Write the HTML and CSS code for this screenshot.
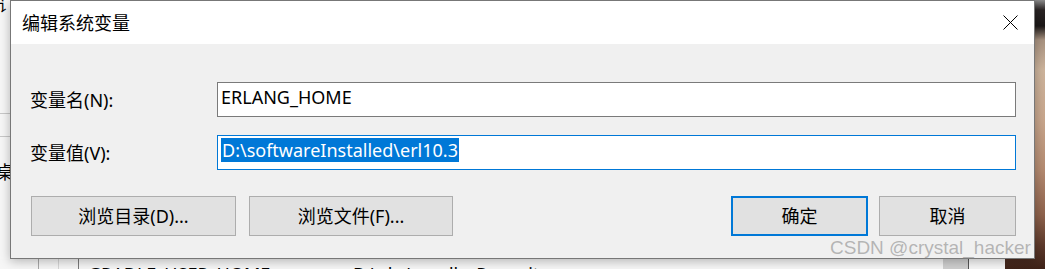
FILE: index.html
```html
<!DOCTYPE html>
<html lang="zh-CN">
<head>
<meta charset="utf-8">
<title>编辑系统变量</title>
<link rel="stylesheet" href="styles.css">
</head>
<body>
<div class="desktop">
  <div class="bg-left">
    <span class="bg-glyph-top">讠</span>
    <span class="bg-line l1"></span>
    <span class="bg-line l2"></span>
    <span class="bg-glyph-mid">桌</span>
  </div>
  <div class="bg-bottom">
    <span class="col-line c1"></span>
    <span class="col-line c2"></span>
    <span class="col-line c3"></span>
    <span class="bg-text t1">GRADLE_USER_HOME</span>
    <span class="bg-text t2">D:\abc\gradle_Repository</span>
    <span class="bg-scroll"></span>
  </div>
  <div class="photo"></div>

  <div class="dialog">
    <div class="titlebar">
      <span class="title">编辑系统变量</span>
      <svg class="close" width="15" height="15" viewBox="0 0 15 15" aria-hidden="true">
        <path d="M0.5 0.5 L14.5 14.5 M14.5 0.5 L0.5 14.5" stroke="#000" stroke-width="1" fill="none"/>
      </svg>
    </div>
    <div class="content">
      <div class="form">
        <span class="label">变量名(N):</span>
        <div class="field">ERLANG_HOME</div>
        <span class="label">变量值(V):</span>
        <div class="field focus"><span class="sel">D:\softwareInstalled\erl10.3</span></div>
      </div>
      <div class="buttons">
        <div class="btn b1">浏览目录(D)...</div>
        <div class="btn b2">浏览文件(F)...</div>
        <div class="spacer"></div>
        <div class="btn ok">确定</div>
        <div class="btn cancel">取消</div>
      </div>
    </div>
  </div>

  <div class="watermark">CSDN @crystal_hacker</div>
</div>
</body>
</html>
```

FILE: styles.css
```css
html, body {
  margin: 0;
  padding: 0;
}

body {
  width: 1045px;
  height: 269px;
  overflow: hidden;
  font-family: "Noto Sans", "Noto Sans CJK SC", sans-serif;
  color: #000;
}

.desktop {
  position: relative;
  width: 1045px;
  height: 269px;
  background: #f3f3f3;
  overflow: hidden;
}

/* ---------- background window (left strip) ---------- */
.bg-left {
  position: absolute;
  left: 0;
  top: 0;
  width: 12px;
  height: 269px;
  background: #f7f7f7;
}
.bg-glyph-top {
  position: absolute;
  left: -2px;
  top: -6px;
  font-size: 16px;
  line-height: 20px;
  font-family: "Noto Sans CJK SC", sans-serif;
}
.bg-glyph-mid {
  position: absolute;
  left: -4px;
  top: 160px;
  font-size: 18px;
  line-height: 22px;
  font-family: "Noto Sans CJK SC", sans-serif;
}
.bg-line {
  position: absolute;
  left: 0;
  width: 12px;
  height: 1px;
  background: #c8c8c8;
}
.l1 { top: 113px; }
.l2 { top: 136px; }

/* ---------- background window (bottom strip) ---------- */
.bg-bottom {
  position: absolute;
  left: 0;
  top: 259px;
  width: 1005px;
  height: 10px;
  background: #f6f6f6;
  overflow: hidden;
}
.col-line {
  position: absolute;
  top: 0;
  width: 1px;
  height: 10px;
}
.c1 { left: 38px; background: #a8a8a8; }
.c2 { left: 58px; background: #d6d6d6; }
.c3 { left: 78px; background: #7a7a7a; }
.bg-text {
  position: absolute;
  top: 3px;
  font-size: 18px;
  line-height: 24px;
  white-space: nowrap;
}
.t1 { left: 88px; }
.t2 { left: 353px; }
.bg-scroll {
  position: absolute;
  left: 943px;
  top: 0;
  width: 25px;
  height: 10px;
  background: #cfcfcf;
  border-right: 1px solid #555;
}

/* ---------- photo on the right ---------- */
.photo {
  position: absolute;
  left: 1005px;
  top: 0;
  width: 40px;
  height: 269px;
  background: linear-gradient(180deg,
    #8c8c8c 0px,
    #2a2424 10px,
    #1c1818 26px,
    #a89280 40px,
    #cdb49c 70px,
    #c8a68c 120px,
    #b48a70 170px,
    #8e624c 215px,
    #5e3a2c 245px,
    #3e2218 269px);
}

/* ---------- dialog ---------- */
.dialog {
  position: absolute;
  left: 10px;
  top: 0;
  width: 1023px;
  height: 257px;
  border: 1px solid #777;
  background: #f0f0f0;
  box-shadow: 0 2px 10px rgba(0, 0, 0, 0.28);
  display: flex;
  flex-direction: column;
}

.titlebar {
  height: 43px;
  flex: none;
  background: #fff;
  display: flex;
  align-items: center;
  justify-content: space-between;
  padding: 0 16px 0 11px;
}
.title {
  font-size: 18px;
  line-height: 24px;
}
.close {
  display: block;
}

.content {
  flex: 1;
  padding: 38px 18px 0 19px;
}

.form {
  display: grid;
  grid-template-columns: 187px 1fr;
  row-gap: 18px;
  align-items: center;
}
.label {
  font-size: 18px;
  line-height: 24px;
  white-space: nowrap;
}
.field {
  height: 35px;
  box-sizing: border-box;
  border: 1px solid #7a7a7a;
  background: #fff;
  padding: 2px 3px 0;
  font-size: 18px;
  line-height: 24px;
  white-space: nowrap;
  overflow: hidden;
}
.field.focus {
  border-color: #0078d7;
}
.sel {
  background: #0078d7;
  color: #fff;
  display: inline-block;
  padding-left: 1px;
  padding-right: 1px;
}

.buttons {
  display: flex;
  margin-top: 26px;
  margin-left: 1px;
}
.btn {
  height: 40px;
  box-sizing: border-box;
  border: 1px solid #adadad;
  background: #e1e1e1;
  font-size: 18px;
  line-height: 24px;
  display: flex;
  align-items: center;
  justify-content: center;
  white-space: nowrap;
}
.b1 { width: 205px; }
.b2 { width: 204px; margin-left: 13px; }
.spacer { flex: 1; }
.ok {
  width: 137px;
  border: 2px solid #0078d7;
}
.cancel {
  width: 137px;
  margin-left: 11px;
}

/* ---------- watermark ---------- */
.watermark {
  position: absolute;
  left: 830px;
  top: 236px;
  font-family: "Liberation Sans", sans-serif;
  font-size: 19px;
  line-height: 24px;
  color: rgba(140, 140, 140, 0.6);
  white-space: nowrap;
}
```
